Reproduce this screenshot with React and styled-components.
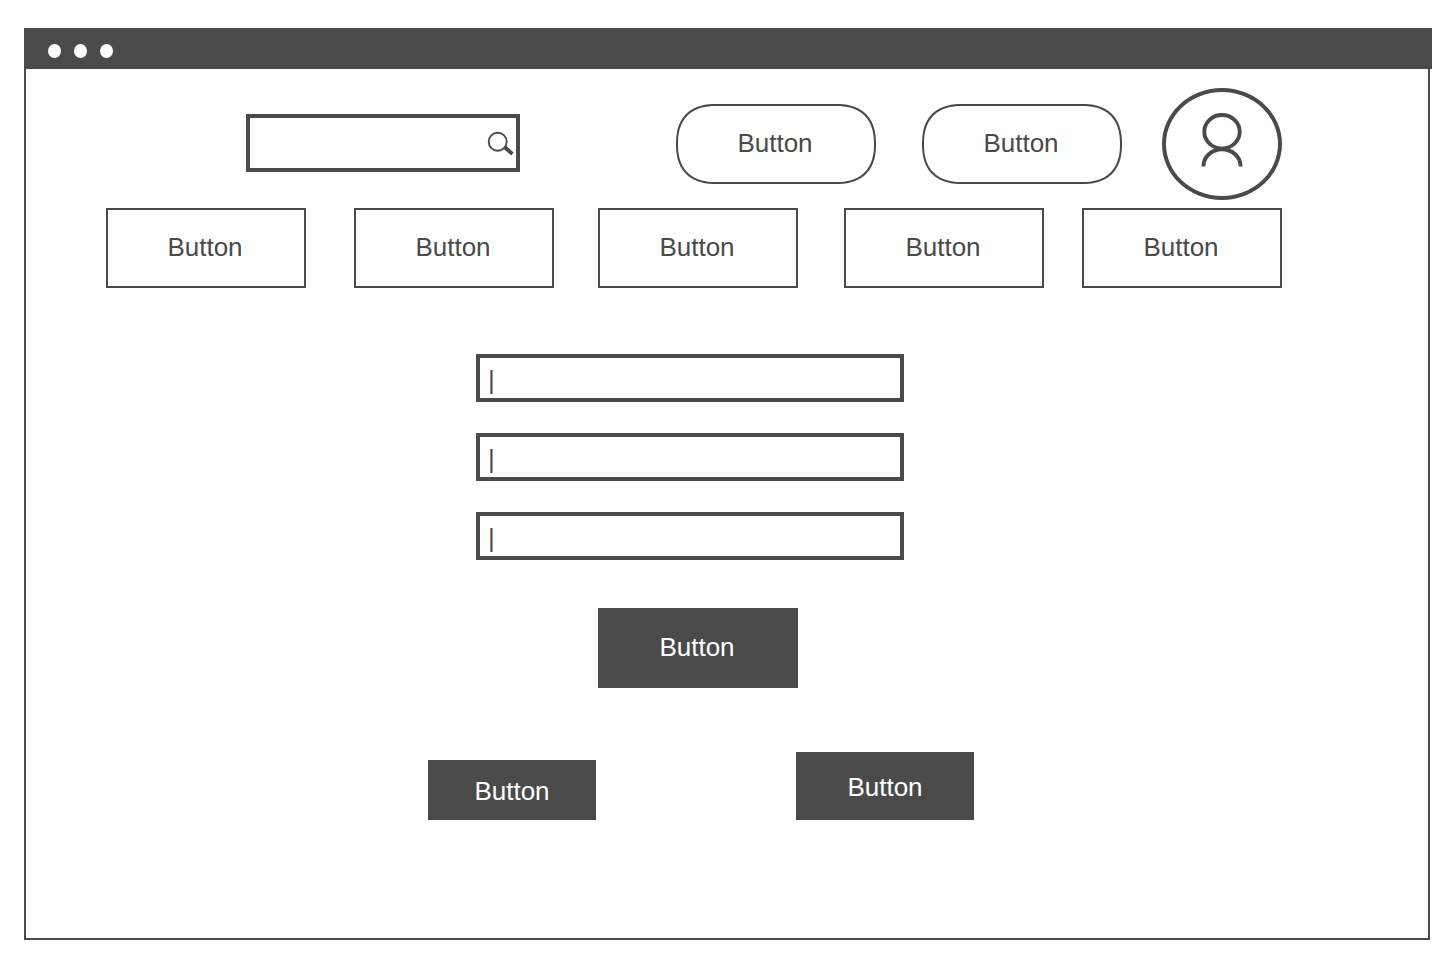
import React from "react";
import styled, { createGlobalStyle } from "styled-components";

const INK = "#4a4a4a";

const GlobalStyle = createGlobalStyle`
  *, *::before, *::after { box-sizing: border-box; }
  body {
    margin: 0;
    background: #fff;
    color: ${INK};
    font-family: "Liberation Sans", Arial, sans-serif;
  }
  button, input { font: inherit; color: inherit; margin: 0; }
`;

const Page = styled.div`
  display: flex;
  min-height: 100vh;
  padding: 28px 16px 26px 24px;
`;

const Window = styled.div`
  flex: 1;
  display: flex;
  flex-direction: column;
`;

const TitleBar = styled.div`
  display: flex;
  align-items: center;
  gap: 13px;
  height: 41px;
  margin-right: -2px;
  padding: 5px 24px 0;
  background: ${INK};
`;

const Dot = styled.span`
  width: 13px;
  height: 14px;
  border-radius: 50%;
  background: #fff;
`;

const Body = styled.div`
  flex: 1;
  padding: 19px 146px 48px 80px;
  border: 2px solid ${INK};
  border-top: 0;
`;

const Header = styled.header`
  display: flex;
  align-items: center;
  padding-left: 140px;
`;

const SearchBox = styled.label`
  display: flex;
  align-items: center;
  width: 274px;
  height: 58px;
  margin-bottom: 2px;
  padding-right: 2px;
  border: 4px solid ${INK};
`;

const SearchInput = styled.input`
  flex: 1;
  min-width: 0;
  height: 100%;
  padding: 0 8px;
  border: 0;
  outline: 0;
  background: transparent;
  font-size: 26px;
`;

const HeaderActions = styled.div`
  display: flex;
  gap: 46px;
  margin-left: auto;
  margin-right: 40px;
`;

const Button = styled.button`
  width: 200px;
  height: 80px;
  padding: 0 2px 2px 0;
  border: 2px solid ${INK};
  border-radius: 0;
  background: ${(p) => (p.$solid ? INK : "#fff")};
  color: ${(p) => (p.$solid ? "#fff" : INK)};
  font-size: 26px;
  line-height: 30px;
  cursor: pointer;
`;

const RoundedButton = styled(Button)`
  border-radius: 40px;
  corner-shape: superellipse(1.27);
`;

const CompactButton = styled(Button)`
  width: ${(p) => p.$width}px;
  height: ${(p) => p.$height}px;
  padding: 2px 0 0;
`;

const Avatar = styled.button`
  display: flex;
  justify-content: center;
  width: 120px;
  height: 112px;
  padding: 20px 0 0;
  border: 4px solid ${INK};
  border-radius: 50%;
  background: #fff;
  cursor: pointer;
`;

const Nav = styled.nav`
  display: grid;
  grid-template-columns: 248fr 244fr 246fr 238fr 200px;
  margin-top: 8px;
`;

const Form = styled.form`
  display: flex;
  flex-direction: column;
  align-items: center;
  margin-top: 66px;
`;

const Fields = styled.div`
  display: flex;
  flex-direction: column;
  gap: 31px;
  padding-right: 8px;
`;

const Field = styled.input`
  width: 428px;
  height: 48px;
  padding: 4px 8px 0;
  border: 4px solid ${INK};
  border-radius: 0;
  outline: 0;
  background: #fff;
  font-size: 26px;
`;

const Submit = styled.div`
  margin-top: 48px;
  padding-left: 8px;
`;

const FormActions = styled.div`
  display: flex;
  align-items: flex-end;
  gap: 200px;
  margin-top: 64px;
  padding-left: 14px;
`;

const SearchIcon = () => (
  <svg width="28" height="26" viewBox="0 0 28 26" fill="none" stroke={INK} aria-hidden="true">
    <ellipse cx="11.7" cy="11.8" rx="9" ry="9" strokeWidth="1.9" />
    <path d="M17.8 17.2 L20.5 19.4" strokeWidth="2.6" />
    <path d="M19.2 17.5 L26.4 24" strokeWidth="3.8" />
  </svg>
);

const UserIcon = () => (
  <svg width="44" height="56" viewBox="0 0 44 56" fill="none" stroke={INK} strokeWidth="3.9" aria-hidden="true">
    <ellipse cx="22" cy="19.8" rx="17.7" ry="16.8" />
    <path d="M3.4 54.4 A18.6 17.2 0 0 1 40.6 54.4" />
  </svg>
);

export default function App() {
  return (
    <>
      <GlobalStyle />
      <Page>
        <Window>
          <TitleBar>
            <Dot />
            <Dot />
            <Dot />
          </TitleBar>
          <Body>
            <Header>
              <SearchBox>
                <SearchInput type="text" aria-label="Search" />
                <SearchIcon />
              </SearchBox>
              <HeaderActions>
                <RoundedButton type="button">Button</RoundedButton>
                <RoundedButton type="button">Button</RoundedButton>
              </HeaderActions>
              <Avatar type="button" aria-label="Account">
                <UserIcon />
              </Avatar>
            </Header>
            <Nav>
              {[1, 2, 3, 4, 5].map((n) => (
                <Button key={n} type="button">Button</Button>
              ))}
            </Nav>
            <Form onSubmit={(e) => e.preventDefault()}>
              <Fields>
                {[1, 2, 3].map((n) => (
                  <Field key={n} type="text" aria-label={`Field ${n}`} defaultValue="|" />
                ))}
              </Fields>
              <Submit>
                <Button type="submit" $solid>Button</Button>
              </Submit>
              <FormActions>
                <CompactButton type="button" $solid $width={168} $height={60}>Button</CompactButton>
                <CompactButton type="button" $solid $width={178} $height={68}>Button</CompactButton>
              </FormActions>
            </Form>
          </Body>
        </Window>
      </Page>
    </>
  );
}
